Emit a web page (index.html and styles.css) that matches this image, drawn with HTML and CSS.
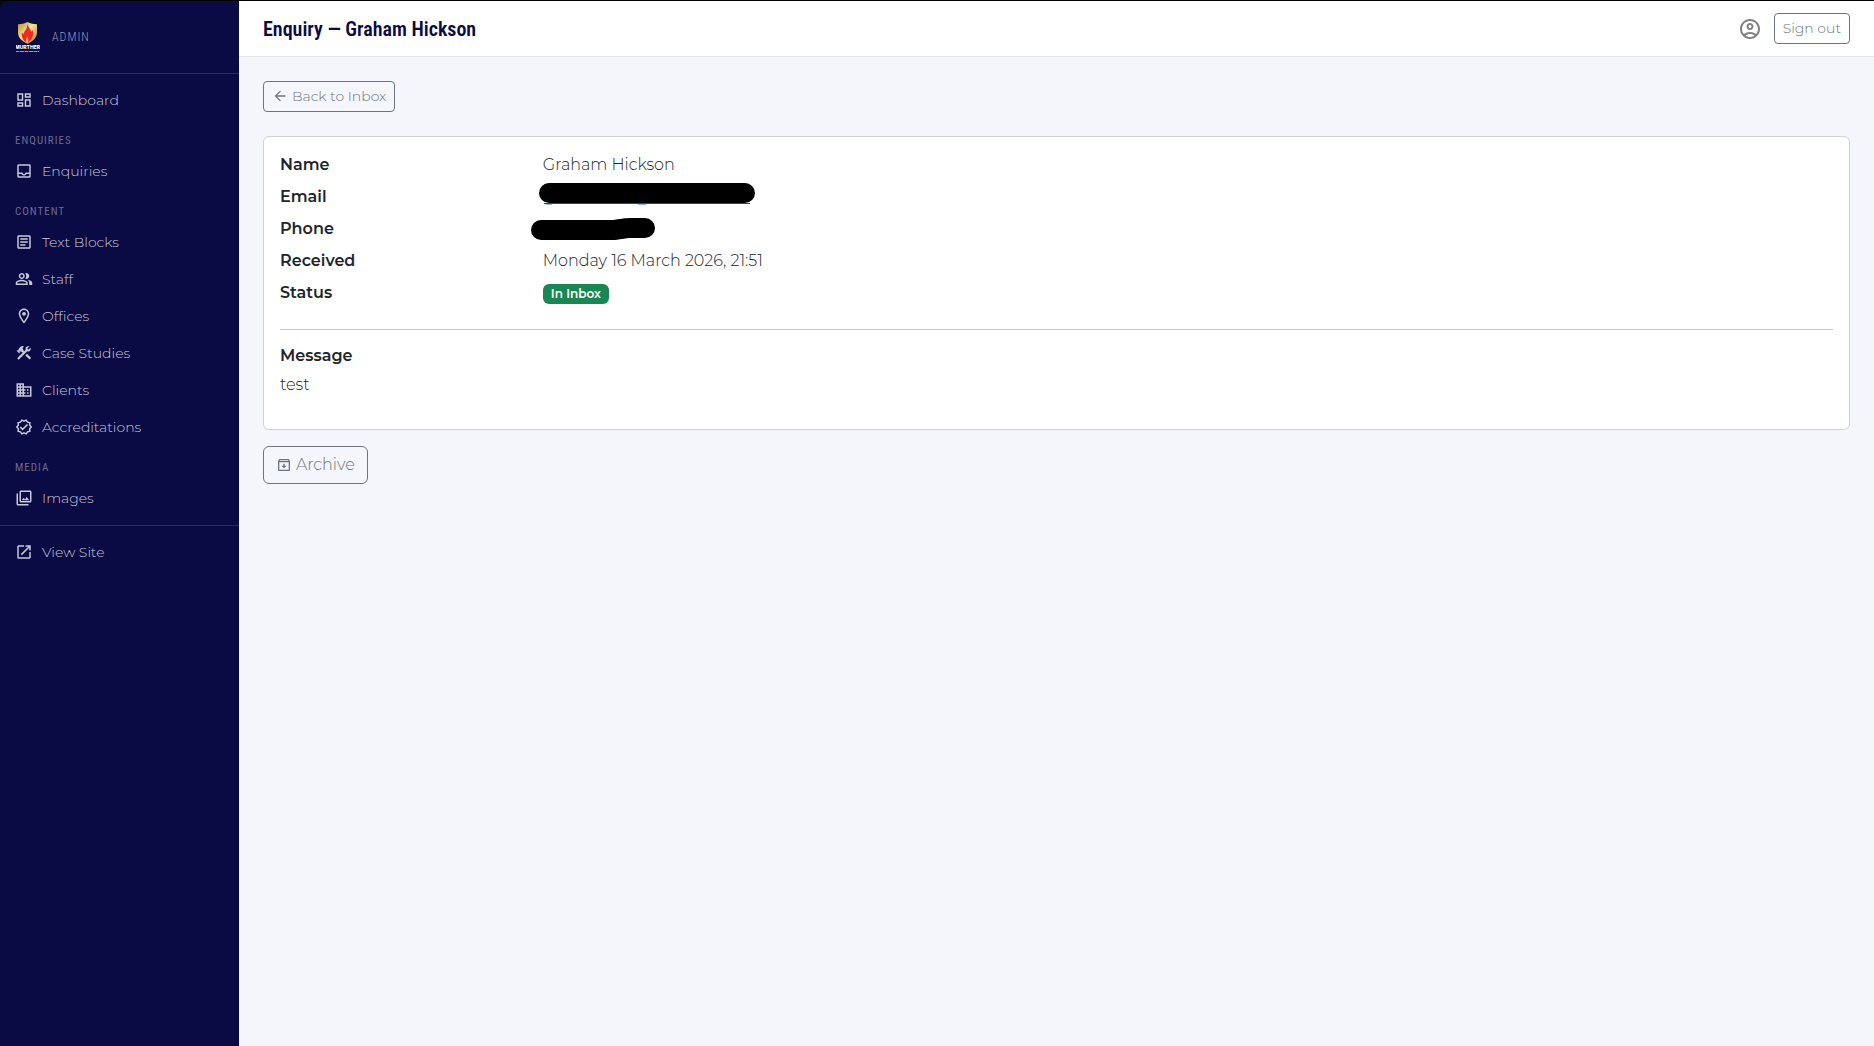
FILE: index.html
```html
<!DOCTYPE html>
<html lang="en">
<head>
    <meta charset="UTF-8">
    <meta name="viewport" content="width=device-width, initial-scale=1.0">
    <title>Enquiry — Graham Hickson</title>
    <link rel="stylesheet" href="styles.css">
</head>
<body>
    <aside class="sidebar">
        <div class="brand">
            <svg class="brand-logo" viewBox="0 0 24 32" aria-hidden="true">
                <defs>
                    <linearGradient id="gold" x1="0" y1="0" x2="1" y2="1">
                        <stop offset="0" stop-color="#b88a2c"/>
                        <stop offset=".45" stop-color="#f6e29a"/>
                        <stop offset="1" stop-color="#a87820"/>
                    </linearGradient>
                </defs>
                <path fill="url(#gold)" d="M11.500 1c3 1.600 6 2.100 9.500 2.200v8.300c0 5-3.500 8.500-9.500 11.300C5.500 20 2 16.500 2 11.500V3.200C5.500 3.100 8.500 2.600 11.500 1z"/>
                <path fill="#ed2a24" d="M11 3c1 3 4 5 4 8l1.600-2c1.400 4.500-.1 9.500-4.600 12.500.8-2.500.3-4.300-1-6-.2 2.300-1.700 3.500-.9 6C6.700 19 5 15 6 11.500l1.500 2C7.500 10 12 8.500 11 3z"/>
                <text class="brand-word" x="11.500" y="28" text-anchor="middle">MURTHER</text>
                <path stroke="#9b9bb8" stroke-dasharray="3 .5 5 .5" d="M0 30.500h23"/>
            </svg>
            <span class="brand-label">ADMIN</span>
        </div>
        <nav class="nav">
            <a href="#"><svg viewBox="0 0 24 24"><path d="M19 5v2h-4V5h4M9 5v6H5V5h4m10 8v6h-4v-6h4M9 17v2H5v-2h4M21 3h-8v6h8V3zM11 3H3v10h8V3zm10 8h-8v10h8V11zm-10 4H3v6h8v-6z"/></svg>Dashboard</a>
            <h2>ENQUIRIES</h2>
            <a href="#"><svg viewBox="0 0 24 24"><path d="M19 3H5c-1.100 0-2 .9-2 2v14c0 1.100.9 2 2 2h14c1.100 0 2-.9 2-2V5c0-1.100-.9-2-2-2zm0 16H5v-3h3.560c.69 1.190 1.970 2 3.450 2s2.750-.81 3.450-2H19v3zm0-5h-4.990c0 1.100-.9 2-2 2s-2-.9-2-2H5V5h14v9z"/></svg>Enquiries</a>
            <h2>CONTENT</h2>
            <a href="#"><svg viewBox="0 0 24 24"><path d="M19 5v14H5V5h14m0-2H5c-1.100 0-2 .9-2 2v14c0 1.100.9 2 2 2h14c1.100 0 2-.9 2-2V5c0-1.100-.9-2-2-2zm-5 14H7v-2h7v2zm3-4H7v-2h10v2zm0-4H7V7h10v2z"/></svg>Text Blocks</a>
            <a href="#"><svg viewBox="0 0 24 24"><path d="M16.670 13.130C18.040 14.060 19 15.320 19 17v3h4v-3c0-2.180-3.570-3.470-6.330-3.870zM15 12c2.210 0 4-1.790 4-4s-1.790-4-4-4c-.47 0-.91.1-1.330.24C14.500 5.270 15 6.580 15 8s-.5 2.730-1.330 3.760c.42.14.86.24 1.330.24zM9 12c2.210 0 4-1.790 4-4s-1.790-4-4-4-4 1.790-4 4 1.790 4 4 4zm0-6c1.100 0 2 .9 2 2s-.9 2-2 2-2-.9-2-2 .9-2 2-2zM9 13c-2.670 0-8 1.340-8 4v3h16v-3c0-2.660-5.330-4-8-4zm6 5H3v-.99C3.200 16.290 6.300 15 9 15s5.800 1.290 6 2v1z"/></svg>Staff</a>
            <a href="#"><svg viewBox="0 0 24 24"><path d="M12 2C8.130 2 5 5.130 5 9c0 5.250 7 13 7 13s7-7.750 7-13c0-3.870-3.130-7-7-7zM7 9c0-2.760 2.240-5 5-5s5 2.240 5 5c0 2.880-2.880 7.190-5 9.880C9.920 16.210 7 11.850 7 9z"/><circle cx="12" cy="9" r="2.500"/></svg>Offices</a>
            <a href="#"><svg viewBox="0 0 24 24"><path d="M13.780 15.170l2.120-2.120 5.660 5.650-2.130 2.120zM17.500 10c1.930 0 3.500-1.570 3.500-3.500 0-.58-.16-1.120-.41-1.600l-2.700 2.700-1.490-1.490 2.700-2.700c-.48-.25-1.020-.41-1.600-.41C15.570 3 14 4.570 14 6.500c0 .41.08.8.21 1.160l-1.850 1.850-1.780-1.780.71-.71-1.410-1.410L12 3.490c-1.170-1.170-3.070-1.170-4.240 0L4.220 7.030l1.410 1.410H2.810L2.100 9.150l3.540 3.540.71-.71V9.150l1.410 1.410.71-.71 1.780 1.780-7.410 7.410 2.120 2.120L16.340 9.790c.36.13.75.21 1.160.21z"/></svg>Case Studies</a>
            <a href="#"><svg viewBox="0 0 24 24"><path d="M12 7V3H2v18h20V7H12zM6 19H4v-2h2v2zm0-4H4v-2h2v2zm0-4H4V9h2v2zm0-4H4V5h2v2zm4 12H8v-2h2v2zm0-4H8v-2h2v2zm0-4H8V9h2v2zm0-4H8V5h2v2zm10 12h-8v-2h2v-2h-2v-2h2v-2h-2V9h8v10zm-2-8h-2v2h2v-2zm0 4h-2v2h2v-2z"/></svg>Clients</a>
            <a href="#"><svg viewBox="0 0 24 24"><path d="M23 12l-2.440-2.780.34-3.680-3.610-.82-1.890-3.180L12 3 8.600 1.540 6.710 4.720l-3.610.81.340 3.680L1 12l2.440 2.780-.34 3.690 3.610.82 1.890 3.180L12 21l3.400 1.460 1.890-3.180 3.610-.82-.34-3.680L23 12zm-4.510 2.110l.26 2.790-2.740.62-1.430 2.410L12 18.820l-2.580 1.110-1.430-2.410-2.740-.62.26-2.800L3.660 12l1.850-2.120-.26-2.780 2.740-.61 1.430-2.410L12 5.180l2.580-1.110 1.430 2.410 2.740.62-.26 2.790L20.340 12l-1.850 2.110z"/><path d="M10.090 13.750l-2.320-2.330-1.480 1.490 3.800 3.810 7.340-7.360-1.480-1.490z"/></svg>Accreditations</a>
            <h2>MEDIA</h2>
            <a href="#"><svg viewBox="0 0 24 24"><path d="M20 4v12H8V4h12m0-2H8c-1.100 0-2 .9-2 2v12c0 1.100.9 2 2 2h12c1.100 0 2-.9 2-2V4c0-1.100-.9-2-2-2zm-8.500 9.670l1.690 2.260 2.480-3.100L19 15H9zM2 6v14c0 1.100.9 2 2 2h14v-2H4V6H2z"/></svg>Images</a>
            <hr>
            <a href="#"><svg viewBox="0 0 24 24"><path d="M19 19H5V5h7V3H5c-1.110 0-2 .9-2 2v14c0 1.100.89 2 2 2h14c1.100 0 2-.9 2-2v-7h-2v7zM14 3v2h3.590l-9.830 9.830 1.410 1.410L19 6.410V10h2V3h-7z"/></svg>View Site</a>
        </nav>
    </aside>

    <div class="page">
        <header class="topbar">
            <h1>Enquiry — Graham Hickson</h1>
            <div class="account">
                <svg class="account-icon" viewBox="0 0 24 24" aria-hidden="true"><path d="M12 2C6.480 2 2 6.480 2 12s4.480 10 10 10 10-4.480 10-10S17.520 2 12 2zM7.350 18.500C8.660 17.560 10.260 17 12 17s3.340.56 4.650 1.500C15.340 19.440 13.740 20 12 20s-3.340-.56-4.650-1.500zm10.790-1.380C16.450 15.800 14.320 15 12 15s-4.450.8-6.140 2.120C4.700 15.730 4 13.950 4 12c0-4.420 3.580-8 8-8s8 3.580 8 8c0 1.950-.7 3.730-1.860 5.120z"/><path d="M12 6c-1.930 0-3.500 1.570-3.500 3.500S10.070 13 12 13s3.500-1.570 3.500-3.500S13.930 6 12 6zm0 5c-.83 0-1.500-.67-1.500-1.500S11.170 8 12 8s1.500.67 1.500 1.500S12.830 11 12 11z"/></svg>
                <button type="button" class="btn btn-sm">Sign out</button>
            </div>
        </header>

        <main class="content">
            <a href="#" class="btn btn-sm btn-back"><svg viewBox="0 0 24 24"><path d="M20 11H7.830l5.590-5.590L12 4l-8 8 8 8 1.410-1.410L7.830 13H20v-2z"/></svg>Back to Inbox</a>

            <section class="card">
                <dl class="details">
                    <dt>Name</dt>
                    <dd>Graham Hickson</dd>
                    <dt>Email</dt>
                    <dd>
                        <a href="#" class="redacted redacted-email" aria-label="Email address hidden">
                            <svg viewBox="0 0 216 24"><path fill="none" stroke="#0b4fb5" d="M5 20.500h206"/><path fill="none" stroke="#8fb4f5" d="M7 21.500h6M99 21.500h8"/><rect width="216" height="20" rx="10"/></svg>
                        </a>
                    </dd>
                    <dt>Phone</dt>
                    <dd>
                        <span class="redacted redacted-phone">
                            <svg viewBox="0 0 124 24"><path d="M10 3h71c8-1 12-2 20-2h13a10 10 0 0 1 0 20h-13c-8 0-12 2-20 2H10A10 10 0 0 1 10 3z"/></svg>
                        </span>
                    </dd>
                    <dt>Received</dt>
                    <dd>Monday 16 March 2026, 21:51</dd>
                    <dt>Status</dt>
                    <dd><span class="badge">In Inbox</span></dd>
                </dl>
                <hr>
                <h2>Message</h2>
                <p>test</p>
            </section>

            <button type="button" class="btn"><svg viewBox="0 0 24 24"><path d="M20.540 5.230l-1.390-1.680C18.880 3.210 18.470 3 18 3H6c-.47 0-.88.21-1.160.55L3.460 5.230C3.170 5.570 3 6.020 3 6.500V19c0 1.100.9 2 2 2h14c1.100 0 2-.9 2-2V6.500c0-.48-.17-.93-.46-1.270zM6.240 5h11.520l.83 1H5.420l.82-1zM5 19V8h14v11H5zm8-9h-2v3H8l4 4 4-4h-3z"/></svg>Archive</button>
        </main>
    </div>
</body>
</html>
```
FILE: styles.css
```css
* {
    box-sizing: border-box;
}

body {
    margin: 0;
    min-height: 100vh;
    display: flex;
    border-top: 1px solid #000;
    background-color: #0a0a0a;
    color: #212529;
    font-family: Montserrat, Inter, sans-serif;
    font-size: 16px;
    font-weight: 300;
    line-height: 24px;
}

svg {
    flex-shrink: 0;
    fill: currentColor;
}

/* Sidebar */
.sidebar {
    width: 239px;
    flex-shrink: 0;
    background-color: #0a0a44;
    border-top-left-radius: 8px;
}

.brand {
    display: flex;
    align-items: center;
    gap: 12px;
    height: 73px;
    padding: 0 16px;
    border-bottom: 1px solid #2a2a5c;
}

.brand-logo {
    width: 24px;
    height: 32px;
}

.brand-word {
    fill: #fff;
    font-family: Inter, sans-serif;
    font-size: 5px;
    font-weight: 800;
}

.brand-label {
    color: #9d9db4;
    font-family: "Roboto Condensed", "Liberation Sans Narrow", Roboto, sans-serif;
    font-size: 12px;
    letter-spacing: 1px;
}

.nav {
    padding: 8px 0;
}

.nav a {
    display: flex;
    align-items: center;
    gap: 9px;
    height: 37px;
    padding: 0 15px 1px;
    color: #c8c8d6;
    font-size: 14px;
    text-decoration: none;
}

.nav svg {
    width: 18px;
    height: 18px;
}

.nav h2 {
    margin: 0;
    padding: 16px 15px 6px;
    color: #6c6c8f;
    font-family: "Roboto Condensed", "Liberation Sans Narrow", Roboto, sans-serif;
    font-size: 11px;
    font-weight: 400;
    line-height: 12px;
    letter-spacing: 1px;
}

.nav hr {
    margin: 8px 0;
    border: 0;
    border-top: 1px solid #2a2a5c;
}

/* Page */
.page {
    flex: 1;
    background-color: #f4f6fb;
}

.topbar {
    display: flex;
    align-items: center;
    justify-content: space-between;
    height: 56px;
    padding: 0 24px;
    background-color: #fff;
    border-bottom: 1px solid #e5e7eb;
}

.topbar h1 {
    margin: 0;
    color: #0a0a44;
    font-family: "Roboto Condensed", "Liberation Sans Narrow", Roboto, sans-serif;
    font-size: 20px;
    font-weight: 600;
}

.account {
    display: flex;
    align-items: center;
    gap: 12px;
}

.account-icon {
    width: 24px;
    height: 24px;
    color: #808080;
}

.content {
    display: flex;
    flex-direction: column;
    align-items: flex-start;
    padding: 24px;
}

/* Buttons */
.btn {
    display: inline-flex;
    align-items: center;
    gap: 4px;
    height: 38px;
    padding: 0 12px 1px;
    border: 1px solid #6c757d;
    border-radius: 6px;
    background-color: transparent;
    color: #6c757d;
    font-family: inherit;
    font-size: 16px;
    font-weight: 300;
    text-decoration: none;
    cursor: pointer;
}

.btn-sm {
    height: 31px;
    padding: 0 8px 1px;
    border-radius: 4px;
    font-size: 14px;
}

.btn svg {
    width: 16px;
    height: 16px;
}

.btn:hover {
    background-color: #6c757d;
    color: #fff;
}

.btn-back {
    margin-bottom: 24px;
}

/* Enquiry details */
.card {
    width: 100%;
    margin-bottom: 16px;
    padding: 16px;
    background-color: #fff;
    border: 1px solid #d0d1d3;
    border-radius: 6px;
}

.details {
    display: grid;
    grid-template-columns: 1fr 5fr;
    row-gap: 8px;
    margin: 0 -12px 24px;
}

.details dt,
.details dd {
    height: 24px;
    margin: 0;
    padding: 0 12px;
}

.details dt {
    font-weight: 600;
}

.redacted {
    display: flex;
    color: #000;
}

.redacted-email {
    width: 216px;
    margin: -2px 0 0 -4px;
}

.redacted-phone {
    width: 124px;
    margin-left: -12px;
}

.badge {
    display: inline-block;
    padding: 4px 8px;
    border-radius: 6px;
    background-color: #198754;
    color: #fff;
    font-size: 12px;
    font-weight: 600;
    line-height: 12px;
}

.card hr {
    margin: 0 0 16px;
    border: 0;
    border-top: 1px solid #c7c8c9;
}

.card h2 {
    margin: 0 0 8px;
    font-size: 16px;
    font-weight: 600;
    line-height: 19px;
}

.card p {
    margin: 0 0 16px;
}
```
